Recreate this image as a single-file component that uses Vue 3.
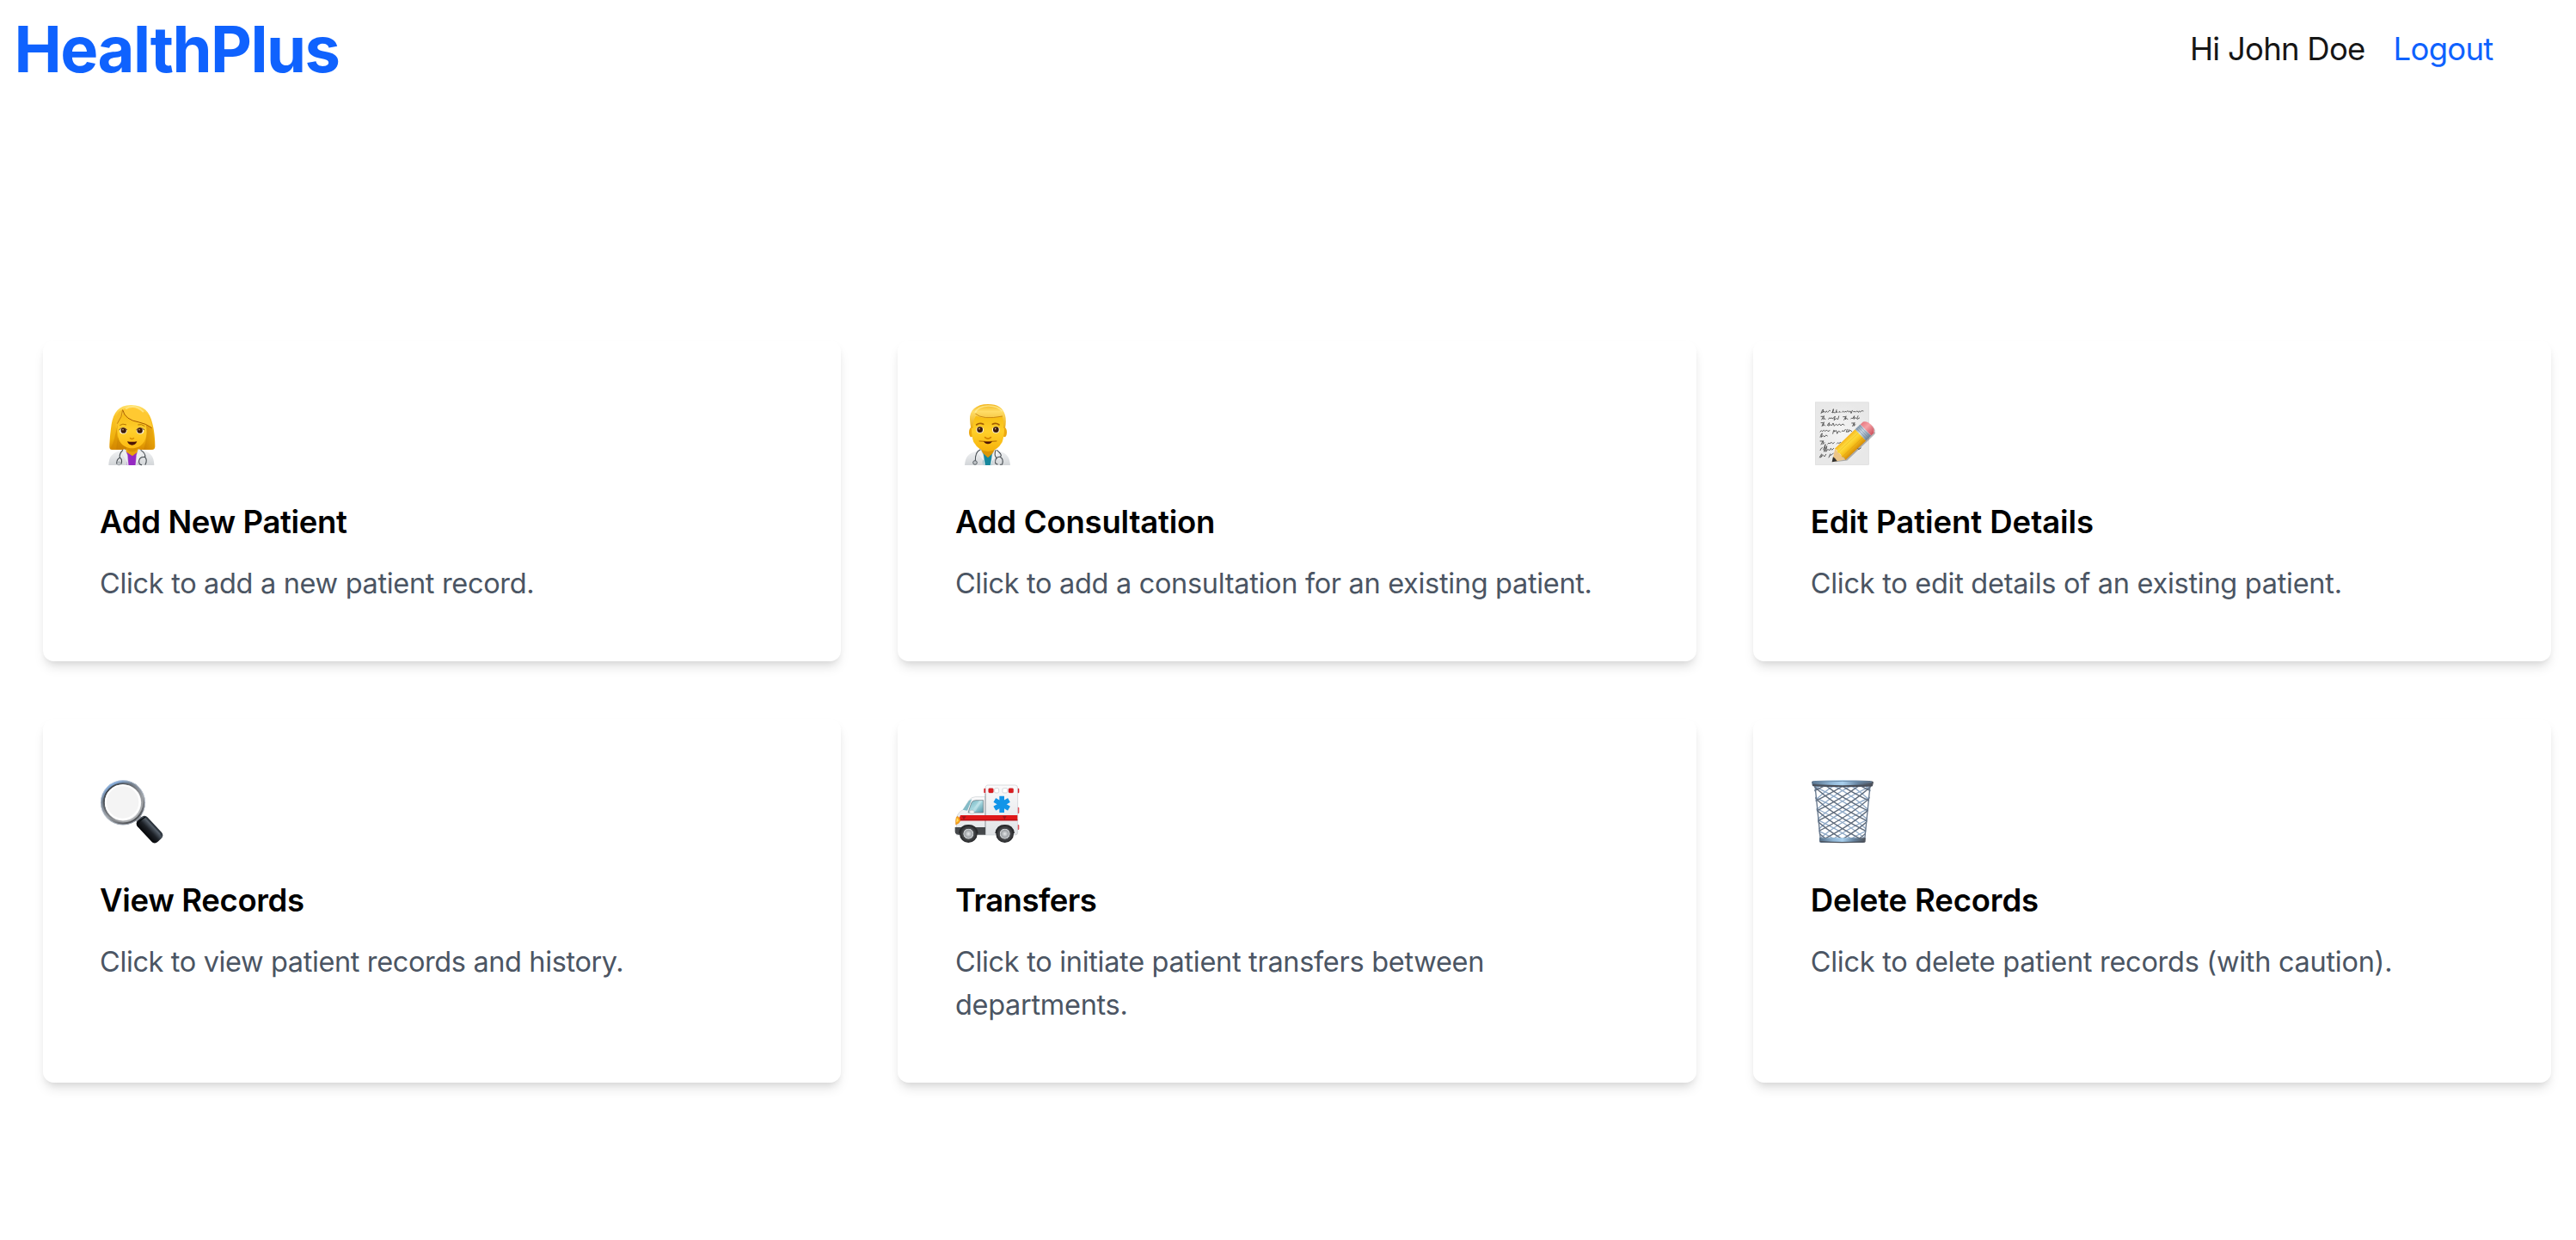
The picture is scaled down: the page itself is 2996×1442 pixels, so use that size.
<script setup>
const cards = [
  { icon: 'woman', box: '50 39 225 250', title: 'Add New Patient', text: 'Click to add a new patient record.', ts: -0.36, ds: -0.33 },
  { icon: 'man', box: '34 39 225 250', title: 'Add Consultation', text: 'Click to add a consultation for an existing patient.', ts: -0.22, ds: -0.32 },
  { icon: 'memo', box: '47 39 225 250', title: 'Edit Patient Details', text: 'Click to edit details of an existing patient.', ts: -0.05, ds: -0.28 },
  { icon: 'search', box: '50 39 225 250', title: 'View Records', text: 'Click to view patient records and history.', ts: -0.36, ds: -0.38 },
  { icon: 'ambulance', box: '49 39 225 250', title: 'Transfers', text: 'Click to initiate patient transfers between departments.', ts: -0.5, ds: -0.3 },
  { icon: 'basket', box: '47 39 225 250', title: 'Delete Records', text: 'Click to delete patient records (with caution).', ts: -0.16, ds: -0.28 }
]
const script = [
  'M83 92q5-14 7-14t-2 12q4-9 7-4t4 2q3-7 5-2t5-1q3-6 6-2 M121 89q6-4 5-12l-3 13q5-4 8 0 M137 80l-3 10q4-9 6-1 M145 87q5-5 4 2 M156 88q5-7 6-2t5-1l4 2 5-4 4 4 5-3 3 8 4-10 M196 86h6 M205 87q4-7 6-1t5-2l4 3 5-4 5 1',
  'M83 103h8l-6 11 M93 101l-2 12q4-8 7 0 M109 112q4-9 6-1 4-8 7 0l6-4 4-5-4 14 8-6 6 3 3-11 M160 104h9l-6 11 M170 102l-2 11q5-8 8 0 M187 111q4-7 6 0l6-10-2 11 6-5 5 4 4-10 M210 112l7-4',
  'M83 125h8l-5 12 M93 123l-3 12q4-7 7 0 M105 134q5-10 7-9l-3 11 7-5 4 4 5-9 4 10 6-6 6 4 6-5 5 6 6-6 6 4 M190 126h8l-5 11 M200 124l-3 12 6-5',
  'M80 156q5-8 7-1l6-4 4 4 5-5 5 5 6-3 M124 163l3-12q5 0 1 5l8-4 3 11 5-9 6 3 M155 155q5-7 7 1l6-8 M174 148l-3 9 5-1 M180 149l-2 8 7-6 5 4',
  'M80 175q5-16 7-13l-3 13 6-5 5 4 5-6 5 3',
  'M80 189h9l-6 12 M91 188l-2 12 6-6 M106 199q5-8 7-1l6-5 5 5 5-4 M138 198q5-8 7-1l6-4 4 4',
  'M80 221q6-13 8-9 M91 219l7-19-4 26 9-20-3 20 7-9 5 5 5-8 4 6 6-6',
  'M78 246q7-16 8-11t-5 11l9-8 5 5 5-8 M110 246l5-12 M115 239l7-4 4-4'
].join(' ')
const weave = (first, bend) => {
  const d = []
  for (let y = first; y < 262; y += 37) {
    d.push(`M58 ${y}Q${bend} ${y + 62} 257 ${y + 128}`, `M257 ${y}Q${315 - bend} ${y + 62} 58 ${y + 128}`)
  }
  return d.join(' ')
}
const front = weave(-38, 122)
const back = weave(-38, 192)
</script>

<template>
  <div class="page">
    <header class="header">
      <h1 class="logo">HealthPlus</h1>
      <nav class="nav">
        <span class="greeting">Hi John Doe</span>
        <a class="logout">Logout</a>
      </nav>
    </header>

    <main class="grid">
      <article v-for="c in cards" :key="c.title" class="card">
        <svg class="icon" :viewBox="c.box">
          <g v-if="c.icon === 'woman'">
            <defs>
              <linearGradient id="wh" x1="0" y1="0" x2="0" y2="1"><stop offset="0" stop-color="#ffe16a" /><stop offset=".25" stop-color="#fbc52a" /><stop offset=".75" stop-color="#efb00c" /><stop offset="1" stop-color="#d98c00" /></linearGradient>
              <linearGradient id="wf" x1="0" y1="0" x2="0" y2="1"><stop offset="0" stop-color="#f6b914" /><stop offset=".5" stop-color="#ffcf2c" /><stop offset="1" stop-color="#fdbb12" /></linearGradient>
              <linearGradient id="wc" x1="0" y1="0" x2="0" y2="1"><stop offset="0" stop-color="#f4f5f6" /><stop offset="1" stop-color="#d3d6d9" /></linearGradient>
              <linearGradient id="ws" x1="0" y1="0" x2="1" y2="0"><stop offset="0" stop-color="#c57a00" /><stop offset="1" stop-color="#e9a30a" /></linearGradient>
            </defs>
            <path d="M160 63C118 62 98 88 91 130C87 158 84 190 84 210Q84 219 94 219H230Q243 219 243 208C243 180 240 150 234 128C224 84 203 64 160 63Z" fill="url(#wh)" />
            <path d="M119 112Q107 145 112 219H94Q88 219 86 215C104 190 106 145 119 112Z" fill="#cf8500" opacity=".55" />
            <path d="M207 130Q221 165 203 219H235Q240 217 242 212C240 180 236 150 231 138Z" fill="url(#ws)" opacity=".6" />
            <path d="M112 170Q118 198 143 211V219H108Z" fill="#c57c00" opacity=".6" />
            <path d="M143 196H184V226L164 244L143 226Z" fill="#d99000" />
            <path d="M81 273C82 245 91 232 119 223L137 217L146 273Z" fill="url(#wc)" />
            <path d="M240 273C239 245 230 232 207 223L184 217L176 273Z" fill="url(#wc)" />
            <path d="M140 223L145 273H179L184 223Q163 242 140 223Z" fill="#9528c1" />
            <path d="M142 216Q163 237 183 216L184 226L164 241L141 226Z" fill="#e9a20a" />
            <path d="M139 218L125 232L144 262L146 273H150L147 238Z M184 218L202 232L181 262L179 273H175L178 238Z" fill="#eceeef" stroke="#c9ccd0" stroke-width="1" />
            <path d="M121 111C108 130 109 168 120 190C130 207 147 214 162 214C180 214 196 207 206 189C215 170 215 148 211 132Q160 120 136 88Z" fill="url(#wf)" />
            <path d="M130 78Q125 108 107 145Q99 112 116 87Z" fill="#f8c12a" />
            <path d="M130 80Q138 115 187 123Q213 128 235 145Q224 98 198 78Q160 57 130 80Z" fill="#ffc931" />
            <path d="M130 80Q138 115 187 123Q210 127 232 143" fill="none" stroke="#a75b00" stroke-width="3" />
            <path d="M130 80Q129 103 111 128" fill="none" stroke="#b26900" stroke-width="3" opacity=".75" />
            <path d="M140 76Q172 58 203 87" fill="none" stroke="#fff0a2" stroke-width="6" opacity=".65" />
            <path d="M120 134Q130 126 143 132M183 132Q196 128 207 137" fill="none" stroke="#b57500" stroke-width="3" />
            <ellipse cx="132" cy="153" rx="13" ry="11" fill="#fff5e0" /><ellipse cx="191" cy="153" rx="13" ry="11" fill="#fff5e0" />
            <circle cx="133" cy="152" r="9.5" fill="#3e1b08" /><circle cx="190" cy="152" r="9.5" fill="#3e1b08" />
            <circle cx="131" cy="149" r="2.3" fill="#d6bca5" /><circle cx="188" cy="149" r="2.3" fill="#d6bca5" />
            <path d="M117 150Q130 136 146 150M177 150Q190 136 206 150" fill="none" stroke="#572c08" stroke-width="2.5" />
            <path d="M155 178Q162 185 170 178" fill="none" stroke="#d78a00" stroke-width="4" />
            <path d="M146 190Q163 193 180 190Q175 203 163 203Q151 203 146 190Z" fill="#4c1506" />
            <path d="M130 221Q117 234 120 247Q109 252 109 267M120 247Q130 252 125 268" fill="none" stroke="#41474c" stroke-width="3.2" stroke-linecap="round" />
            <path d="M194 221Q211 232 208 245Q189 243 187 258Q186 271 196 272M208 245Q217 254 209 271" fill="none" stroke="#41474c" stroke-width="3.2" stroke-linecap="round" />
            <circle cx="117" cy="267" r="6" fill="#c5c9cc" stroke="#7d848a" stroke-width="1.5" />
          </g>

          <g v-else-if="c.icon === 'man'">
            <defs>
              <linearGradient id="mh" x1="0" y1="0" x2="0" y2="1"><stop offset="0" stop-color="#f2b41a" /><stop offset=".3" stop-color="#ffdd67" /><stop offset="1" stop-color="#e9ab14" /></linearGradient>
              <linearGradient id="mf" x1="0" y1="0" x2="0" y2="1"><stop offset="0" stop-color="#f5b90f" /><stop offset=".5" stop-color="#ffcf29" /><stop offset="1" stop-color="#f6b20a" /></linearGradient>
              <linearGradient id="mc" x1="0" y1="0" x2="0" y2="1"><stop offset="0" stop-color="#f4f5f6" /><stop offset="1" stop-color="#d3d6d9" /></linearGradient>
            </defs>
            <path d="M67 273C69 244 80 232 106 225L126 217L140 273Z" fill="url(#mc)" />
            <path d="M226 273C224 244 213 232 190 225L170 217L154 273Z" fill="url(#mc)" />
            <path d="M125 220L133 273H162L171 220Q148 240 125 220Z" fill="#16879c" />
            <path d="M125 200H171V226L148 247L125 226Z" fill="#dc9605" />
            <path d="M122 217L110 232L132 257L134 273H138L132 235Z M173 217L187 232L165 257L161 273H157L163 235Z" fill="#f0f1f2" stroke="#c9ccd0" stroke-width="1" />
            <ellipse cx="90" cy="158" rx="8" ry="17" fill="#eda80f" /><ellipse cx="206" cy="158" rx="8" ry="17" fill="#eda80f" />
            <path d="M92 104Q87 165 98 192Q117 225 148 225Q180 225 198 192Q209 160 204 104Q148 72 92 104Z" fill="url(#mf)" />
            <path d="M148 60C106 60 83 82 85 114Q86 131 89 145L96 143Q94 120 106 101Q144 115 198 102Q205 121 202 143L208 145Q213 116 208 98C201 73 183 60 148 60Z" fill="url(#mh)" />
            <path d="M104 93Q129 116 199 102" fill="none" stroke="#b87000" stroke-width="2.6" opacity=".8" />
            <path d="M103 91Q111 68 148 66Q183 65 198 85" fill="none" stroke="#fff1a3" stroke-width="5" opacity=".65" />
            <path d="M108 132Q119 124 132 130M164 130Q176 124 187 132" fill="none" stroke="#a55f00" stroke-width="5" stroke-linecap="round" />
            <ellipse cx="120" cy="150" rx="13" ry="11" fill="#fff5e0" /><ellipse cx="176" cy="150" rx="13" ry="11" fill="#fff5e0" />
            <circle cx="120" cy="149" r="10" fill="#3b1907" /><circle cx="176" cy="149" r="10" fill="#3b1907" />
            <circle cx="118" cy="146" r="2.4" fill="#d6bca5" /><circle cx="174" cy="146" r="2.4" fill="#d6bca5" />
            <path d="M138 176Q148 185 158 176" fill="none" stroke="#d18300" stroke-width="5" stroke-linecap="round" />
            <path d="M118 189Q148 193 178 189" fill="none" stroke="#b06700" stroke-width="3" stroke-linecap="round" />
            <path d="M133 190Q148 193 163 190Q158 199 148 199Q138 199 133 190Z" fill="#4c1506" />
            <path d="M121 219Q103 226 104 259M175 221Q168 238 179 249M180 221Q203 241 188 244Q172 245 174 266L181 270M190 244Q204 250 198 270L191 271" fill="none" stroke="#41474c" stroke-width="3.2" stroke-linecap="round" />
            <circle cx="103" cy="264" r="7" fill="#c0c4c8" stroke="#596066" stroke-width="3" />
          </g>

          <g v-else-if="c.icon === 'memo'">
            <defs>
              <radialGradient id="pp"><stop offset="0" stop-color="#f5f5f5" /><stop offset="1" stop-color="#e8e8e8" /></radialGradient>
              <linearGradient id="pe" x1="0" y1="0" x2="0" y2="1"><stop offset="0" stop-color="#f5b51e" /><stop offset=".3" stop-color="#ffdf40" /><stop offset=".62" stop-color="#f7c21d" /><stop offset="1" stop-color="#d78d08" /></linearGradient>
              <linearGradient id="pm" x1="0" y1="0" x2="0" y2="1"><stop offset="0" stop-color="#8298ad" /><stop offset=".4" stop-color="#d0dde8" /><stop offset="1" stop-color="#6d8195" /></linearGradient>
              <linearGradient id="pr" x1="0" y1="0" x2="0" y2="1"><stop offset="0" stop-color="#e77982" /><stop offset=".4" stop-color="#f6a2a6" /><stop offset="1" stop-color="#cd535f" /></linearGradient>
            </defs>
            <rect x="63.5" y="53.5" width="186" height="218" fill="url(#pp)" stroke="#d0d0d0" stroke-width="1.5" />
            <path :d="script" fill="none" stroke="#444" stroke-width="2.5" stroke-linecap="round" stroke-linejoin="round" />
            <path d="M203 218l6-5 6 5 7-5" fill="none" stroke="#444" stroke-width="2.5" stroke-linecap="round" />
            <g transform="translate(121 262) rotate(-43.5) scale(1.01 1.3)">
              <path d="M8 6L42 25H174Q187 20 187 2L180 20Z" fill="#000" opacity=".28" />
              <path d="M0 0L39 -20V20Z" fill="#edc588" />
              <path d="M0 0L15 -8Q18 0 15 8Z" fill="#303030" />
              <path d="M38 -21H136V21H38Q44 14 37 8Q43 0 37 -8Q44 -15 38 -21Z" fill="url(#pe)" />
              <path d="M38 -8H136M38 9H136" stroke="#d9970d" stroke-width="1.5" opacity=".6" />
              <rect x="136" y="-21" width="25" height="42" fill="url(#pm)" />
              <path d="M142 -21V21M149 -21V21M156 -21V21" stroke="#71869b" stroke-width="1.5" />
              <path d="M161 -21H174Q187 -15 187 0Q187 15 174 21H161Z" fill="url(#pr)" />
            </g>
          </g>

          <g v-else-if="c.icon === 'search'">
            <defs>
              <linearGradient id="sr" x1=".2" y1="0" x2=".8" y2="1"><stop offset="0" stop-color="#85b4ed" /><stop offset=".25" stop-color="#74808e" /><stop offset=".6" stop-color="#a0a4a9" /><stop offset="1" stop-color="#3f4145" /></linearGradient>
              <linearGradient id="sn" x1="0" y1="0" x2="1" y2="1"><stop offset="0" stop-color="#282f38" /><stop offset=".55" stop-color="#85888c" /><stop offset="1" stop-color="#c5c7ca" /></linearGradient>
              <linearGradient id="sh" x1="0" y1="0" x2="0" y2="1"><stop offset="0" stop-color="#202830" /><stop offset=".25" stop-color="#4b545e" /><stop offset=".55" stop-color="#1d2127" /><stop offset="1" stop-color="#050608" /></linearGradient>
            </defs>
            <path d="M175 193L192 176L205 189L187 206Z" fill="#a8abb0" />
            <circle cx="131" cy="130" r="72" fill="#f4f4f4" stroke="url(#sr)" stroke-width="12" />
            <circle cx="131" cy="130" r="66.5" fill="none" stroke="url(#sn)" stroke-width="6" />
            <circle cx="130" cy="129" r="59" fill="none" stroke="#fff" stroke-width="6" />
            <circle cx="131" cy="130" r="77" fill="none" stroke="#c6d2e3" stroke-width="2" />
            <g transform="translate(224 224) rotate(47)">
              <rect x="-51" y="-24" width="102" height="48" rx="15" fill="url(#sh)" />
              <path d="M-39 -15H35" stroke="#616a75" stroke-width="5" stroke-linecap="round" opacity=".6" />
              <path d="M-42 -19Q-48 0 -42 19" fill="none" stroke="#090d12" stroke-width="4" />
            </g>
          </g>

          <g v-else-if="c.icon === 'ambulance'">
            <defs>
              <linearGradient id="ab" x1="0" y1="0" x2="0" y2="1"><stop offset="0" stop-color="#fafafb" /><stop offset="1" stop-color="#e0e3e6" /></linearGradient>
              <linearGradient id="aw" x1="0" y1="0" x2="1" y2="1"><stop offset="0" stop-color="#6faebc" /><stop offset=".5" stop-color="#a8d9e1" /><stop offset="1" stop-color="#5193a5" /></linearGradient>
              <radialGradient id="at"><stop offset="0" stop-color="#e6e8ea" /><stop offset=".4" stop-color="#9da1a5" /><stop offset=".54" stop-color="#d0d3d5" /><stop offset=".6" stop-color="#4a4c4f" /><stop offset="1" stop-color="#242527" /></radialGradient>
            </defs>
            <rect x="149" y="80" width="8" height="17" rx="3" fill="#d5141c" /><rect x="264" y="80" width="8" height="17" rx="3" fill="#d5141c" />
            <rect x="264" y="146" width="8" height="22" rx="3" fill="#e34b51" /><rect x="264" y="207" width="8" height="18" rx="3" fill="#e34b51" />
            <path d="M53 213L54 183Q56 165 78 154L96 123Q103 111 119 110H154V243H53Z" fill="url(#ab)" stroke="#b9bec3" stroke-width="1.5" />
            <path d="M75 155L97 123L107 118L91 158Z" fill="#83bbc7" />
            <path d="M94 165L105 132Q109 122 120 122H147V165Z" fill="url(#aw)" stroke="#66727a" stroke-width="2" />
            <path d="M107 161L133 123H143L118 163Z" fill="#d6f0f4" opacity=".45" />
            <path d="M160 69H258Q267 69 267 79V234Q267 243 259 243H155V80Q153 71 160 69Z" fill="url(#ab)" stroke="#c9cdd1" stroke-width="2" />
            <path d="M154 98V243" stroke="#9a9fa4" stroke-width="3" />
            <path d="M67 174H266V193H60Z" fill="#df1719" /><path d="M61 189H266V193H60Z" fill="#b60d13" />
            <path d="M48 216H154V242H60Q48 241 48 231Z" fill="#45484b" />
            <path d="M51 207Q49 183 56 178Q66 181 66 193Q64 203 51 207Z" fill="#f9a51b" stroke="#db7b16" stroke-width="1.5" />
            <path d="M54 183Q60 186 60 194L53 199Z" fill="#ffdf68" />
            <rect x="99" y="157" width="16" height="12" rx="5" fill="#f0f2f3" stroke="#adb2b6" stroke-width="1.5" />
            <path d="M72 178L79 190L87 178ZM214 177H228L221 190Z" fill="#9e161b" />
            <rect x="165" y="80" width="17" height="16" rx="4" fill="#dc1c20" stroke="#a9272a" /><rect x="186" y="80" width="15" height="16" rx="4" fill="#fff" stroke="#b4b8bc" stroke-width="1.5" />
            <rect x="214" y="80" width="17" height="16" rx="4" fill="#fff" stroke="#b4b8bc" stroke-width="1.5" /><rect x="235" y="80" width="17" height="16" rx="4" fill="#dc1c20" stroke="#a9272a" />
            <g fill="#1295e8"><rect x="203" y="107" width="17" height="58" rx="1" /><rect x="203" y="107" width="17" height="58" rx="1" transform="rotate(60 211.5 136)" /><rect x="203" y="107" width="17" height="58" rx="1" transform="rotate(120 211.5 136)" /></g>
            <path d="M61 237Q65 207 95 207Q125 207 129 237M188 237Q192 207 222 207Q252 207 256 237Z" fill="#282a2c" />
            <circle cx="95" cy="239" r="31" fill="url(#at)" /><circle cx="222" cy="239" r="31" fill="url(#at)" />
          </g>

          <g v-else>
            <defs>
              <linearGradient id="br" x1="0" y1="0" x2="1" y2="0"><stop offset="0" stop-color="#536b83" /><stop offset=".3" stop-color="#90b6d5" /><stop offset=".5" stop-color="#a9d0ee" /><stop offset=".75" stop-color="#66839f" /><stop offset="1" stop-color="#4d5159" /></linearGradient>
              <clipPath id="bc"><path d="M58 70H257L236 262H79Z" /></clipPath>
            </defs>
            <g clip-path="url(#bc)" fill="none">
              <path :d="back" stroke="#8fa9c6" stroke-width="4" />
              <path :d="front" stroke="#5e6b7c" stroke-width="4.2" />
            </g>
            <path d="M62 72L81 260M254 72L235 260" stroke="#66778c" stroke-width="4" />
            <path d="M77 253H238V264Q238 270 230 270H84Q77 270 77 264Z" fill="url(#br)" /><path d="M79 266Q157 272 237 266" fill="none" stroke="#4d535c" stroke-width="4" />
            <path d="M50 58Q52 54 64 54Q157 49 252 54Q264 54 266 59L263 71Q262 75 253 74Q157 77 61 74Q53 74 52 69Z" fill="url(#br)" />
            <path d="M53 69Q157 76 263 69" fill="none" stroke="#4a4f59" stroke-width="6" />
            <path d="M56 58Q157 52 260 58" fill="none" stroke="#6a8dac" stroke-width="3" />
          </g>
        </svg>
        <h2 class="title" :style="{ letterSpacing: c.ts + 'px' }">{{ c.title }}</h2>
        <p class="text" :style="{ letterSpacing: c.ds + 'px' }">{{ c.text }}</p>
      </article>
    </main>
  </div>
</template>

<style scoped>
.page {
  min-height: 1442px;
  background: #fff;
  font-family: Inter, "Liberation Sans", sans-serif;
}
.header {
  display: flex;
  align-items: center;
  justify-content: space-between;
  height: 114px;
  padding: 0 96.5px 0 16.5px;
  box-sizing: border-box;
}
.logo {
  margin: 0;
  font-size: 74px;
  line-height: 83px;
  font-weight: 700;
  letter-spacing: -1.5px;
  color: #0f62fe;
}
.nav {
  display: flex;
  gap: 33px;
  font-size: 36.5px;
  line-height: 58px;
  letter-spacing: -0.74px;
  color: #161616;
}
.logout {
  color: #0f62fe;
}
.grid {
  display: grid;
  grid-template-columns: repeat(3, 1fr);
  gap: 66.6px;
  margin: 282px 28.5px 0 49.5px;
}
.card {
  padding: 66.6px;
  border-radius: 12.5px;
  background: #fff;
  box-shadow: 0 8.3px 12.5px -2px rgba(0, 0, 0, 0.1), 0 4.2px 8.3px -4.2px rgba(0, 0, 0, 0.1);
}
.icon {
  display: block;
  width: 75px;
  height: 83.3px;
  margin-bottom: 32.4px;
  overflow: visible;
}
.title {
  margin: 0 0 17.8px;
  font-size: 36.5px;
  line-height: 58.2px;
  font-weight: 600;
  color: #000;
}
.text {
  margin: 0 0 -1.3px;
  font-size: 32.5px;
  line-height: 49.9px;
  color: #4b5563;
}
</style>

<style>
body {
  margin: 0;
  background: #fff;
}
</style>
